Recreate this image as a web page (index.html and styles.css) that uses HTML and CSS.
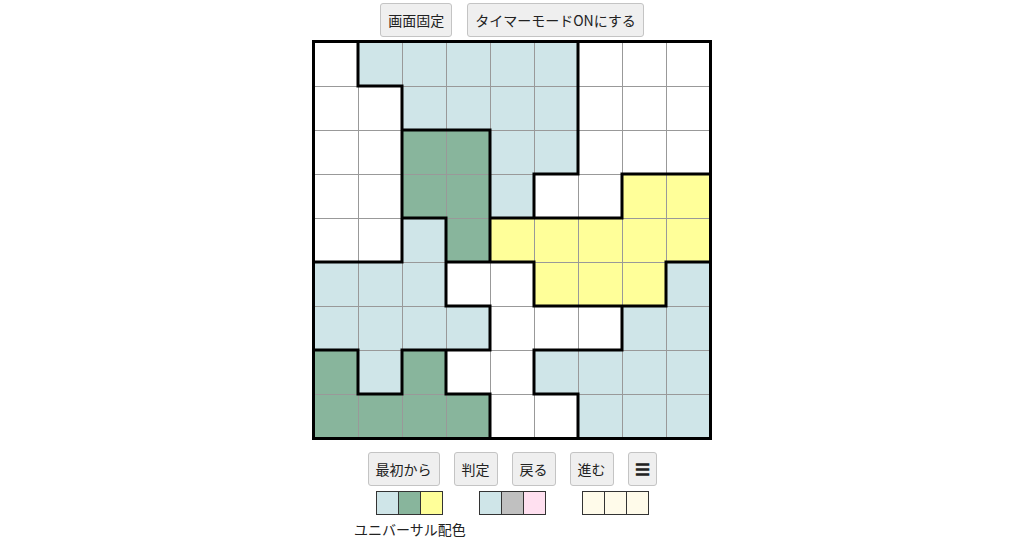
FILE: index.html
```html
<!DOCTYPE html>
<html lang="ja">
<head>
<meta charset="utf-8">
<title>Puzzle</title>
<link rel="stylesheet" href="styles.css">
</head>
<body>
<div class="page">
  <div class="toolbar top">
    <button class="btn">画面固定</button>
    <button class="btn">タイマーモードONにする</button>
  </div>
  <div class="board">
    <svg width="400" height="400" viewBox="0 0 400 400" xmlns="http://www.w3.org/2000/svg">
      <rect x="0" y="0" width="400" height="400" class="w"/>
      <!-- r0 -->
      <rect x="46" y="2" width="220" height="44" class="l"/>
      <!-- r1 -->
      <rect x="90" y="46" width="176" height="44" class="l"/>
      <!-- r2 -->
      <rect x="90" y="90" width="88" height="44" class="g"/>
      <rect x="178" y="90" width="88" height="44" class="l"/>
      <!-- r3 -->
      <rect x="90" y="134" width="88" height="44" class="g"/>
      <rect x="178" y="134" width="44" height="44" class="l"/>
      <rect x="310" y="134" width="88" height="44" class="y"/>
      <!-- r4 -->
      <rect x="90" y="178" width="44" height="44" class="l"/>
      <rect x="134" y="178" width="44" height="44" class="g"/>
      <rect x="178" y="178" width="220" height="44" class="y"/>
      <!-- r5 -->
      <rect x="2" y="222" width="132" height="44" class="l"/>
      <rect x="222" y="222" width="132" height="44" class="y"/>
      <rect x="354" y="222" width="44" height="44" class="l"/>
      <!-- r6 -->
      <rect x="2" y="266" width="176" height="44" class="l"/>
      <rect x="310" y="266" width="88" height="44" class="l"/>
      <!-- r7 -->
      <rect x="2" y="310" width="44" height="44" class="g"/>
      <rect x="46" y="310" width="44" height="44" class="l"/>
      <rect x="90" y="310" width="44" height="44" class="g"/>
      <rect x="222" y="310" width="176" height="44" class="l"/>
      <!-- r8 -->
      <rect x="2" y="354" width="176" height="44" class="g"/>
      <rect x="266" y="354" width="132" height="44" class="l"/>
      <!-- thin grid -->
      <path class="thin" d="M46.5 2V398M90.5 2V398M134.5 2V398M178.5 2V398M222.5 2V398M266.5 2V398M310.5 2V398M354.5 2V398M2 46.5H398M2 90.5H398M2 134.5H398M2 178.5H398M2 222.5H398M2 266.5H398M2 310.5H398M2 354.5H398"/>
      <!-- thick region borders -->
      <path class="thick" d="M46 46H90 M90 90H178 M222 134H266 M310 134H398 M90 178H134 M178 178H310 M2 222H90 M134 222H222 M354 222H398 M134 266H178 M222 266H354 M2 310H46 M90 310H178 M222 310H310 M46 354H90 M134 354H178 M222 354H266 M46 2V46 M46 310V354 M90 46V222 M90 310V354 M134 178V266 M134 310V354 M178 90V222 M178 266V310 M178 354V398 M222 134V178 M222 222V266 M222 310V354 M266 2V134 M266 354V398 M310 134V178 M310 266V310 M354 222V266"/>
      <rect x="1.5" y="1.5" width="397" height="397" class="frame"/>
    </svg>
  </div>
  <div class="toolbar bottom">
    <button class="btn">最初から</button>
    <button class="btn">判定</button>
    <button class="btn">戻る</button>
    <button class="btn">進む</button>
    <button class="btn menu">☰</button>
  </div>
  <div class="palettes">
    <div class="palette">
      <span class="sw sw-l"></span><span class="sw sw-g"></span><span class="sw sw-y"></span>
    </div>
    <div class="palette">
      <span class="sw sw-l"></span><span class="sw sw-gray"></span><span class="sw sw-pink"></span>
    </div>
    <div class="palette">
      <span class="sw sw-cream"></span><span class="sw sw-cream"></span><span class="sw sw-cream"></span>
    </div>
  </div>
  <div class="caption">ユニバーサル配色</div>
</div>
</body>
</html>
```

FILE: styles.css
```css
html, body {
  margin: 0;
  padding: 0;
  background: #ffffff;
}
body {
  font-family: "Noto Sans CJK JP", "Noto Sans", sans-serif;
  font-size: 14px;
  color: #222;
  overflow: hidden;
}
.page {
  display: flex;
  flex-direction: column;
  align-items: center;
  padding-top: 3px;
}
.toolbar {
  display: flex;
  justify-content: center;
  align-items: center;
}
.toolbar.top {
  gap: 15px;
}
.toolbar.bottom {
  gap: 14px;
  margin-top: 12px;
}
.btn {
  font-family: "Noto Sans CJK JP", "Noto Sans", sans-serif;
  font-size: 14px;
  line-height: 20px;
  color: #222;
  background: #efefef;
  border: 1px solid #c4c4c4;
  border-radius: 3px;
  padding: 6px 7px;
  height: 34px;
  box-sizing: border-box;
}
.btn.menu {
  padding: 6px 6px;
  font-size: 15px;
}
.board {
  margin-top: 3px;
  width: 400px;
  height: 400px;
}
.board svg {
  display: block;
}
.w { fill: #ffffff; }
.l { fill: #cfe5e8; }
.g { fill: #88b59c; }
.y { fill: #ffff99; }
.thin {
  fill: none;
  stroke: #999999;
  stroke-width: 1;
}
.thick {
  fill: none;
  stroke: #000000;
  stroke-width: 3;
  stroke-linecap: square;
}
.frame {
  fill: none;
  stroke: #000000;
  stroke-width: 3;
}
.palettes {
  display: flex;
  gap: 36px;
  margin-top: 5px;
}
.palette {
  display: flex;
}
.sw {
  display: block;
  width: 21px;
  height: 22px;
  border: 1px solid #333;
}
.sw + .sw {
  border-left: none;
  width: 21px;
}
.sw-l { background: #cfe5e8; }
.sw-g { background: #88b59c; }
.sw-y { background: #ffff99; }
.sw-gray { background: #c0c0c0; }
.sw-pink { background: #ffe0f0; }
.sw-cream { background: #fffbea; }
.caption {
  width: 316px;
  margin-top: 4px;
  text-align: left;
  font-size: 14px;
  line-height: 20px;
  color: #222;
}
```
